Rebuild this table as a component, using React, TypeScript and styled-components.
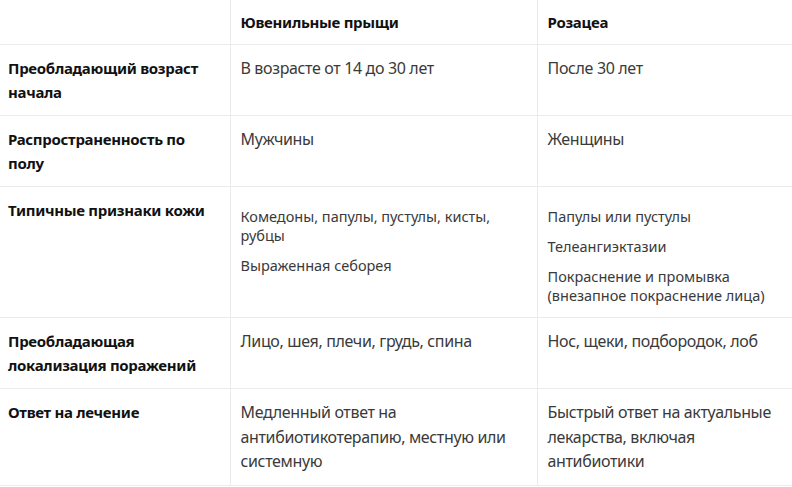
import React from 'react';
import styled, { createGlobalStyle } from 'styled-components';

const GlobalStyle = createGlobalStyle`
  html, body {
    margin: 0;
    padding: 0;
    background: #ffffff;
  }
  body {
    font-family: 'Noto Sans', 'Open Sans', Arial, sans-serif;
    color: #333;
  }
`;

const Table = styled.table`
  width: 792px;
  border-collapse: collapse;
  table-layout: fixed;
`;

const HeadCell = styled.th<{ $first?: boolean }>`
  height: 44px;
  padding: 0 10px 0 ${(p) => (p.$first ? '8px' : '10px')};
  text-align: left;
  font-size: 15px;
  font-weight: 700;
  letter-spacing: -0.3px;
  color: #111;
  border-bottom: 1px solid #ebebeb;
  border-left: ${(p) => (p.$first ? 'none' : '1px solid #ebebeb')};
`;

const Row = styled.tr`
  border-bottom: 1px solid #ebebeb;
`;

const LabelCell = styled.td`
  padding: 11px 10px 11px 8px;
  vertical-align: top;
  font-size: 15px;
  font-weight: 700;
  letter-spacing: -0.3px;
  line-height: 24px;
  color: #111;
`;

const Cell = styled.td`
  padding: 11px 10px 11px 10px;
  vertical-align: top;
  font-size: 16px;
  letter-spacing: -0.35px;
  line-height: 24.7px;
  color: #3a3a3a;
  border-left: 1px solid #ebebeb;
`;

const Note = styled.p`
  margin: 9px 0 11px;
  font-size: 14.5px;
  letter-spacing: 0;
  line-height: 19px;

  &:last-child {
    margin-bottom: 1px;
  }
`;

const App: React.FC = () => {
  return (
    <>
      <GlobalStyle />
      <Table>
        <colgroup>
          <col style={{ width: 230 }} />
          <col style={{ width: 307 }} />
          <col style={{ width: 255 }} />
        </colgroup>
        <thead>
          <tr>
            <HeadCell $first />
            <HeadCell>Ювенильные прыщи</HeadCell>
            <HeadCell>Розацеа</HeadCell>
          </tr>
        </thead>
        <tbody>
          <Row>
            <LabelCell>Преобладающий возраст начала</LabelCell>
            <Cell>В возрасте от 14 до 30 лет</Cell>
            <Cell>После 30 лет</Cell>
          </Row>
          <Row>
            <LabelCell>Распространенность по полу</LabelCell>
            <Cell>Мужчины</Cell>
            <Cell>Женщины</Cell>
          </Row>
          <Row>
            <LabelCell>Типичные признаки кожи</LabelCell>
            <Cell>
              <Note>Комедоны, папулы, пустулы, кисты, рубцы</Note>
              <Note>Выраженная себорея</Note>
            </Cell>
            <Cell>
              <Note>Папулы или пустулы</Note>
              <Note>Телеангиэктазии</Note>
              <Note>Покраснение и промывка (внезапное покраснение лица)</Note>
            </Cell>
          </Row>
          <Row>
            <LabelCell>Преобладающая локализация поражений</LabelCell>
            <Cell>Лицо, шея, плечи, грудь, спина</Cell>
            <Cell>Нос, щеки, подбородок, лоб</Cell>
          </Row>
          <Row>
            <LabelCell>Ответ на лечение</LabelCell>
            <Cell>Медленный ответ на антибиотикотерапию, местную или системную</Cell>
            <Cell>Быстрый ответ на актуальные лекарства, включая антибиотики</Cell>
          </Row>
        </tbody>
      </Table>
    </>
  );
};

export default App;
